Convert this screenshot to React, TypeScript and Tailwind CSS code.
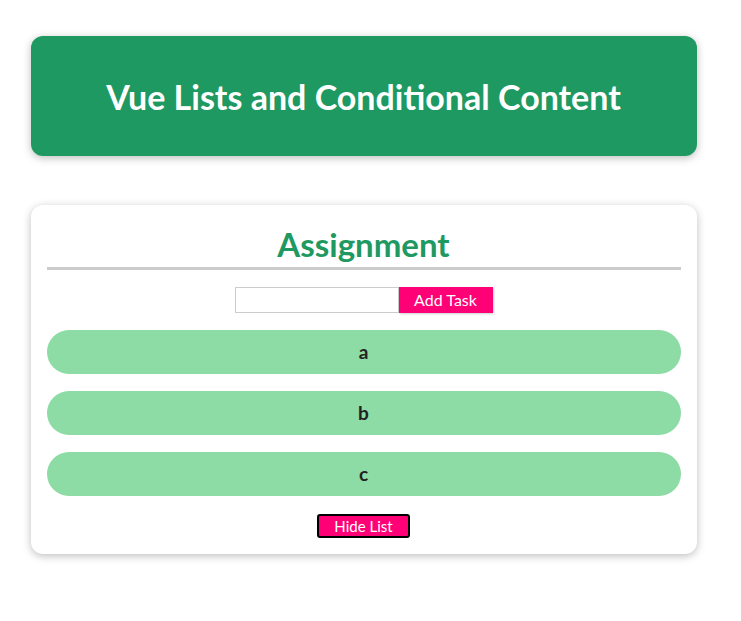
import { useState } from "react";

const font = { fontFamily: '"Lato", "Noto Sans", sans-serif' };

export default function App() {
  const [tasks] = useState(["a", "b", "c"]);
  const [show] = useState(true);

  return (
    <div className="w-[727px] bg-white pt-[36px] pb-[40px]" style={font}>
      {/* header */}
      <header className="mx-auto flex h-[120px] w-[666px] items-center justify-center rounded-xl bg-[#1e9961] shadow-[0_2px_8px_rgba(0,0,0,0.26)]">
        <h1 className="text-[34px] font-bold text-white">Vue Lists and Conditional Content</h1>
      </header>

      {/* assignment card */}
      <section className="mx-auto mt-[49px] w-[666px] rounded-xl bg-white px-4 pt-4 pb-4 shadow-[0_2px_8px_rgba(0,0,0,0.26)]">
        <h2 className="border-b-[3px] border-[#ccc] text-center text-[33px] leading-[46px] font-bold text-[#1e9961]">
          Assignment
        </h2>
        <div className="mt-[17px] flex justify-center">
          <input type="text" className="h-[26px] w-[164px] border border-[#ccc] bg-white px-1 outline-none" />
          <button className="h-[26px] w-[94px] bg-[#ff0077] text-[16px] text-white shadow-[1px_1px_2px_rgba(0,0,0,0.2)]">
            Add Task
          </button>
        </div>
        {show && (
          <ul className="mt-[17px] flex flex-col gap-[17px]">
            {tasks.map((t) => (
              <li
                key={t}
                className="flex h-[44px] items-center justify-center rounded-full bg-[#8ddba5] text-[19px] font-bold text-[#222]"
              >
                {t}
              </li>
            ))}
          </ul>
        )}
        <div className="mt-[18px] flex justify-center">
          <button className="h-[24px] w-[93px] rounded-[3px] border-2 border-black bg-[#ff0077] text-[15px] leading-none text-white">
            {show ? "Hide List" : "Show List"}
          </button>
        </div>
      </section>
    </div>
  );
}
